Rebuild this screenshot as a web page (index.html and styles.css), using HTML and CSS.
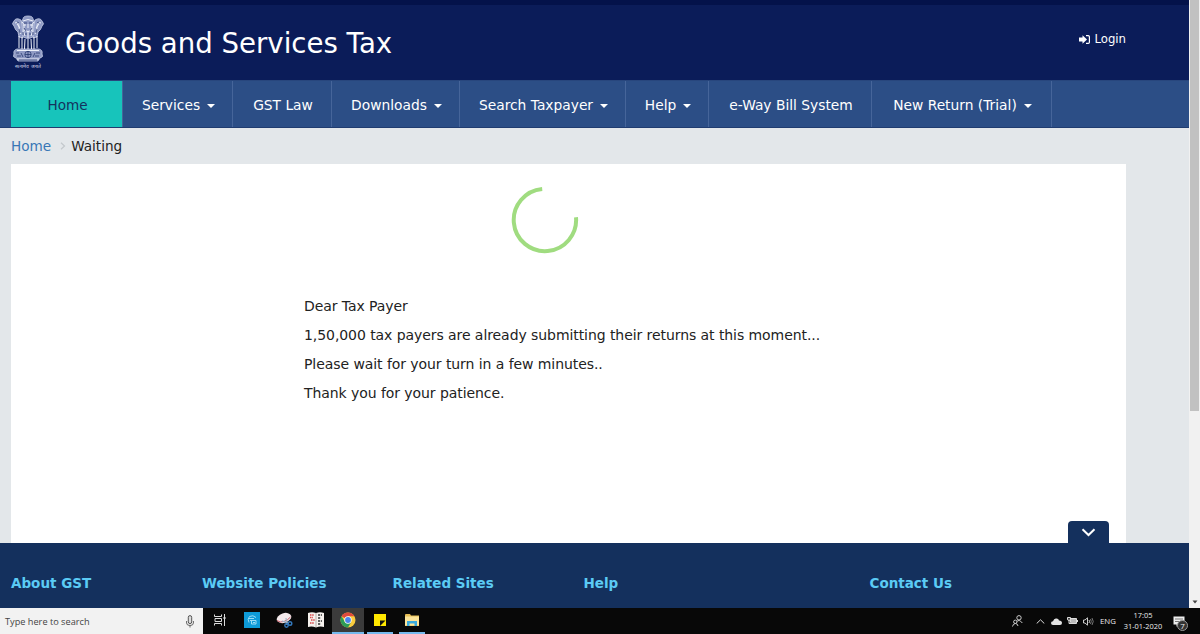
FILE: index.html
```html
<!DOCTYPE html>
<html lang="en">
<head>
  <meta charset="UTF-8">
  <meta name="viewport" content="width=device-width, initial-scale=1.0">
  <title>Goods and Services Tax</title>
  <link rel="stylesheet" href="styles.css">
</head>
<body>
  <div class="browser">
    <div class="page">
      <header class="header">
        <div class="brand">
          <div class="emblem">
            <svg width="34" height="48" viewBox="0 0 34 48">
              <g fill="#8f9ac4" stroke="#c3cae2" stroke-width=".8">
                <path d="M12 4 Q12 1 17 1 Q22 1 22 4 L25 9 L23 21 Q17 26 11 21 L9 9Z"/>
                <path d="M10 5 Q5 2 3 6 Q0 9 3 11 Q4 15 7 17 L8 22 L12 23 L11 10Z"/>
                <path d="M24 5 Q29 2 31 6 Q34 9 31 11 Q30 15 27 17 L26 22 L22 23 L23 10Z"/>
                <path d="M3 39 Q2 35 6 34 H28 Q32 35 31 39 Q33 42 29 43 L27 46 H7 L5 43 Q1 42 3 39Z"/>
              </g>
              <g fill="none" stroke="#eef1fa" stroke-width="1">
                <path d="M8 21 V33 M11 22 V34 M14 24 L13.500 34 M17 24 V34 M20 24 L20.500 34 M23 22 V34 M26 21 V33"/>
                <path d="M12 6 Q17 3 22 6 M12 10 H15 M19 10 H22 M17 9 V13 M13 15 Q17 18 21 15 M6 9 L9 13 M28 9 L25 13"/>
                <path d="M11 7 Q14 9 13 13 T14 21 M23 7 Q20 9 21 13 T20 21 M17 16 V23 M4 8 Q8 6 8 12 T10 19 M30 8 Q26 6 26 12 T24 19 M6 35.500 H28 M6 44 H28"/>
              </g>
              <g fill="none" stroke="#27386f" stroke-width=".8">
                <path d="M13 8 H16 M18 8 H21 M13 13 L15 16 M21 13 L19 16 M14 19 H16 M18 19 H20 M6 7 L8 8 M28 7 L26 8 M8 14 L9 18 M26 14 L25 18 M12 17 V20 M22 17 V20"/>
                <circle cx="17" cy="39.500" r="3.200"/>
                <path d="M17 36 V43 M14 39.500 H20 M5 38 H8 M10 38 L12 42 M6 41 H10 M24 38 L22 42 M25 38 H29 M24 41 H28 M8 45 H26"/>
              </g>
            </svg>
            <span class="motto">सत्यमेव जयते</span>
          </div>
          <h1 class="title">Goods and Services Tax</h1>
        </div>
        <a class="login">
          <svg width="11" height="9" viewBox="0 0 11 9">
            <path fill="#fff" d="M0 2.500 H3.500 V.2 L8 4.500 L3.500 8.800 V6.500 H0Z"/>
            <path fill="none" stroke="#fff" stroke-width="1.200" d="M7 .6 H9.200 Q10.400 .6 10.400 1.800 V7.200 Q10.400 8.400 9.200 8.400 H7"/>
          </svg>
          <span>Login</span>
        </a>
      </header>

      <nav class="nav">
        <a class="nav-item active">Home</a>
        <a class="nav-item">Services <i class="caret"></i></a>
        <a class="nav-item">GST Law</a>
        <a class="nav-item">Downloads <i class="caret"></i></a>
        <a class="nav-item">Search Taxpayer <i class="caret"></i></a>
        <a class="nav-item">Help <i class="caret"></i></a>
        <a class="nav-item">e-Way Bill System</a>
        <a class="nav-item">New Return (Trial) <i class="caret"></i></a>
      </nav>

      <main class="main">
        <div class="breadcrumb">
          <a class="crumb-link">Home</a>
          <svg width="6" height="8" viewBox="0 0 6 8"><path d="M1 .8 L4.500 4 L1 7.200" fill="none" stroke="#c3c8cc" stroke-width="1.200"/></svg>
          <span>Waiting</span>
        </div>
        <div class="content">
          <svg class="spinner" width="68" height="68" viewBox="0 0 68 68">
            <path d="M31.200 2.900 A31.200 31.200 0 1 0 65 31.200" fill="none" stroke="#a0dc80" stroke-width="4"/>
          </svg>
          <div class="message">
            <p>Dear Tax Payer</p>
            <p>1,50,000 tax payers are already submitting their returns at this moment...</p>
            <p>Please wait for your turn in a few minutes..</p>
            <p>Thank you for your patience.</p>
          </div>
          <div class="footer-toggle">
            <svg width="15" height="9" viewBox="0 0 15 9"><path d="M1.500 1.300 L7.500 7 L13.500 1.300" fill="none" stroke="#fff" stroke-width="2"/></svg>
          </div>
        </div>
      </main>

      <footer class="footer">
        <h2>About GST</h2>
        <h2>Website Policies</h2>
        <h2>Related Sites</h2>
        <h2>Help</h2>
        <h2>Contact Us</h2>
      </footer>
    </div>
    <div class="scrollbar">
      <div class="thumb"></div>
      <svg width="6" height="4" viewBox="0 0 6 4"><path d="M.5 .5 H5.500 L3 3.500Z" fill="#444"/></svg>
    </div>
  </div>

  <div class="taskbar">
    <div class="search">
      <span>Type here to search</span>
      <svg width="8" height="13" viewBox="0 0 8 13">
        <rect x="2.300" y=".6" width="3.400" height="8" rx="1.700" fill="#ddd" stroke="#555"/>
        <path d="M.6 6 V8 Q.6 10.500 4 10.500 Q7.400 10.500 7.400 8 V6 M4 10.500 V12.500" fill="none" stroke="#666"/>
      </svg>
    </div>
    <div class="apps">
      <div class="app">
        <svg width="12" height="12" viewBox="0 0 12 12" fill="none" stroke="#ddd">
          <path d="M.5 .5 V2.500 H7.500 V.5 M.5 11.500 V9.500 H7.500 V11.500 M1 4.500 H7.500 V7.500 H1Z M10.500 0 V3 M10.500 5 V12"/>
          <path d="M9.500 4 H11.500" stroke-width="2"/>
        </svg>
      </div>
      <div class="app">
        <svg width="16" height="16" viewBox="0 0 16 16">
          <rect width="16" height="16" fill="#0e9bd8"/>
          <g fill="none" stroke="#9cdcf5"><path d="M12 5.500 Q9 2.500 5.500 4.500 Q3 7 5 10.500 M4.500 6.500 H10 M6 8.500 H12 V12 H7.500 V8.500 M9 10.500 H11"/></g>
        </svg>
      </div>
      <div class="app">
        <svg width="17" height="16" viewBox="0 0 17 16">
          <ellipse cx="8" cy="6" rx="7.500" ry="4.800" fill="#f3e9ec" transform="rotate(-18 8 6)"/>
          <path d="M1 8.500 Q4 11 8 9.500 Q12 8 14.500 5" fill="none" stroke="#c95a66"/>
          <path d="M6 9 L13 11 M10 6 L11 13" stroke="#9fb4c8" stroke-width="1.200"/>
          <circle cx="14" cy="11.500" r="1.800" fill="none" stroke="#3479bd" stroke-width="1.400"/>
          <circle cx="10.500" cy="13.500" r="1.700" fill="none" stroke="#3479bd" stroke-width="1.400"/>
        </svg>
      </div>
      <div class="app">
        <svg width="16" height="16" viewBox="0 0 16 16">
          <path d="M0 1 Q4 -.5 8 1 Q12 -.5 16 1 V15 Q12 14 8 15.500 Q4 14 0 15Z" fill="#f5f1ed"/>
          <path d="M2 3 H6 M2 5.500 H5 M3 8 H7 M2 11 H6" stroke="#d74747" stroke-width="1.600" stroke-dasharray="1.500 .7"/>
          <path d="M10 3 H14 M10 6 H13 M10 9 H14 M10 12 H13" stroke="#333" stroke-width="1.300" stroke-dasharray="2 .8"/>
          <path d="M8 1 V15" stroke="#a9a09b" stroke-width=".8"/>
        </svg>
      </div>
      <div class="app current">
        <svg width="16" height="16" viewBox="0 0 16 16">
          <circle cx="8" cy="8" r="7.500" fill="#f9cb3d"/>
          <path d="M8 8 L1.500 4.200 A7.500 7.500 0 0 1 14.500 4.250 H8Z" fill="#df4a3c"/>
          <path d="M1.500 4.250 A7.500 7.500 0 0 0 8 15.500 L11.200 9.900 L5 10Z" fill="#2d9c57"/>
          <circle cx="8" cy="8" r="3.700" fill="#fff"/>
          <circle cx="8" cy="8" r="2.900" fill="#4a84ea"/>
        </svg>
      </div>
      <div class="app open">
        <svg width="12" height="12" viewBox="0 0 12 12">
          <path d="M0 0 H12 V12 H0Z" fill="#ffe700"/>
          <path d="M6 6.500 H11.500 L6 12Z" fill="#111"/>
        </svg>
      </div>
      <div class="app open">
        <svg width="14" height="12" viewBox="0 0 14 12">
          <path d="M0 1 Q0 0 1 0 H5 L6 1.500 H14 V12 H0Z" fill="#e6bd55"/>
          <path d="M0 2.500 H14 V11.500 H0Z" fill="#fbe49a"/>
          <path d="M2 12 V7 H12 V12 H9.500 V9.500 H4.500 V12Z" fill="#39a9dc"/>
        </svg>
      </div>
    </div>
    <div class="tray">
      <svg class="people" width="11" height="12" viewBox="0 0 11 12" fill="none" stroke="#ccc">
        <circle cx="7" cy="2.800" r="2.200"/><path d="M4.500 7 Q7 3.500 10.300 8"/>
        <circle cx="3.300" cy="6.800" r="1.700"/><path d="M.5 11.500 Q1 8.500 3.500 8.500 Q5.800 8.700 6 11"/>
      </svg>
      <svg class="up" width="9" height="5" viewBox="0 0 9 5"><path d="M.7 4.500 L4.500 .8 L8.300 4.500" fill="none" stroke="#ddd"/></svg>
      <svg class="cloud" width="11" height="7" viewBox="0 0 11 7"><path d="M2 7 Q0 7 0 5 Q0 3.300 2 3.300 Q3 0 5.500 .5 Q7.600 .6 8 2.500 Q11 2.500 11 5 Q11 7 9 7Z" fill="#e3e3e3"/></svg>
      <svg class="battery" width="11" height="8" viewBox="0 0 11 8">
        <path d="M3.500 1.500 H9.500 V6.500 H3.500Z" fill="#bbb" stroke="#ddd"/><path d="M10.500 3 V5" stroke="#ddd"/>
        <path d="M.5 .5 H3.500 V2 Q3.500 3.500 2 3.500 Q.5 3.500 .5 2Z M2 3.500 V6.500 H4" fill="#444" stroke="#ddd"/>
      </svg>
      <svg class="sound" width="11" height="9" viewBox="0 0 11 9" fill="none" stroke="#ccc">
        <path d="M.5 3 H2 L4.500 .8 V8.200 L2 6 H.5Z M6 3 Q7 4.500 6 6"/>
        <path d="M7.500 2 Q9 4.500 7.500 7 M9 1 Q11.500 4.500 9 8" stroke="#777"/>
      </svg>
      <span class="lang">ENG</span>
      <div class="clock"><span>17:05</span><span>31-01-2020</span></div>
      <div class="notify">
        <svg width="12" height="11" viewBox="0 0 12 11">
          <path d="M.5 .5 H11.500 V8.500 H6 L3.500 10.800 V8.500 H.5Z" fill="#eee"/>
          <path d="M2 3 H10 M2 5.500 H8" stroke="#777"/>
        </svg>
        <span class="badge">7</span>
      </div>
    </div>
  </div>
</body>
</html>
```

FILE: styles.css
```css
* {
  box-sizing: border-box;
}

body {
  margin: 0;
  width: 1200px;
  height: 634px;
  overflow: hidden;
  font-family: Verdana, "DejaVu Sans", sans-serif;
  font-size: 14px;
  color: #222;
}

svg {
  display: block;
  flex: none;
}

.browser {
  display: flex;
  height: 608px;
}

.page {
  width: 1189px;
  display: flex;
  flex-direction: column;
}

/* header */
.header {
  height: 80px;
  display: flex;
  justify-content: space-between;
  background: #0b1c59;
  border-top: 5px solid #04124a;
  padding: 0 63px 0 11px;
}

.brand {
  display: flex;
}

.emblem {
  width: 34px;
  padding-top: 10px;
}

.motto {
  display: block;
  font-size: 5px;
  line-height: 7px;
  text-align: center;
  white-space: nowrap;
  color: #d5daec;
}

.title {
  margin: 0 0 0 20px;
  font-size: 27.6px;
  font-weight: normal;
  line-height: 78px;
  height: 75px;
  color: #fff;
}

.login {
  display: flex;
  align-items: center;
  gap: 4px;
  height: 68px;
  font-size: 11.7px;
  color: #fff;
}

/* nav */
.nav {
  height: 48px;
  display: grid;
  grid-template-columns: 112px 110px 99px 128px 166px 83px 163px 180px;
  padding-left: 11px;
  background: #2c4e86;
  border-top: 1px solid #28467d;
  border-bottom: 1px solid #203c70;
}

.nav-item {
  display: flex;
  align-items: center;
  justify-content: center;
  gap: 7px;
  border-right: 1px solid #46659a;
  padding: 2px 0 0 2px;
  font-size: 13.8px;
  color: #fff;
  white-space: nowrap;
}

.nav-item.active {
  background: #17c4bb;
  color: #14315d;
  font-size: 13.6px;
}

.caret {
  border-top: 4px solid #fff;
  border-left: 4px solid transparent;
  border-right: 4px solid transparent;
  margin-top: 2px;
}

/* content */
.main {
  flex: 1;
  display: flex;
  flex-direction: column;
  background: #e3e7ea;
  padding: 0 63px 0 11px;
}

.breadcrumb {
  height: 36px;
  display: flex;
  align-items: center;
  gap: 5px;
  font-size: 13.6px;
}

.breadcrumb svg {
  margin-left: 4px;
}

.crumb-link {
  color: #3776b6;
}

.content {
  position: relative;
  flex: 1;
  background: #fff;
  padding: 22px 0 0 293px;
}

.spinner {
  margin-left: 207px;
}

.message {
  margin-top: 37.5px;
  letter-spacing: -0.07px;
}

.message p {
  margin: 0;
  line-height: 29.3px;
  white-space: nowrap;
}

.footer-toggle {
  position: absolute;
  right: 17px;
  bottom: 0;
  width: 41px;
  height: 22px;
  display: flex;
  justify-content: center;
  padding-top: 7px;
  background: #14305d;
  border-radius: 4px 4px 0 0;
}

.footer {
  height: 65px;
  display: grid;
  grid-template-columns: 191px 190.5px 191px 286px 1fr;
  padding-left: 11px;
  background: #14305d;
}

.footer h2 {
  margin: 0;
  font-size: 13.5px;
  line-height: 81px;
  height: 65px;
  color: #5bcbf5;
}

/* scrollbar */
.scrollbar {
  width: 11px;
  display: flex;
  flex-direction: column;
  justify-content: space-between;
  align-items: center;
  background: #f1f1f1;
  padding-bottom: 4px;
}

.thumb {
  width: 9px;
  height: 411px;
  background: #c1c1c1;
}

/* taskbar */
.taskbar {
  height: 26px;
  display: flex;
  background: #080808;
  font-family: "Open Sans", "Noto Sans", sans-serif;
  color: #eee;
}

.search {
  width: 203px;
  display: flex;
  align-items: center;
  justify-content: space-between;
  background: #f2f2f2;
  padding: 0 9px 0 5px;
  font-size: 9.2px;
  color: #444;
}

.apps {
  display: flex;
  padding-left: 1px;
}

.app {
  width: 32px;
  display: flex;
  align-items: center;
  justify-content: center;
  border-bottom: 2px solid transparent;
}

.app.current {
  background: #3b3b3b;
  border-bottom-color: #76b9ed;
}

.app.open {
  background: linear-gradient(#76b9ed, #76b9ed) center bottom / 26px 2px no-repeat border-box;
}

.tray {
  margin-left: auto;
  display: flex;
  align-items: center;
  padding-right: 15px;
}

.up {
  margin-left: 13px;
}

.cloud {
  margin-left: 6px;
}

.battery,
.sound {
  margin-left: 5px;
}

.lang {
  margin-left: 6px;
  width: 16px;
  font-size: 7.8px;
}

.clock {
  margin-left: 7px;
  width: 40px;
  display: flex;
  flex-direction: column;
  align-items: center;
  font-size: 7.4px;
  line-height: 11.5px;
  white-space: nowrap;
}

.notify {
  position: relative;
  margin-left: 10px;
}

.badge {
  position: absolute;
  left: 4px;
  top: 4px;
  width: 11px;
  height: 11px;
  border: 1px solid #999;
  border-radius: 50%;
  background: #333;
  font-size: 8px;
  line-height: 9px;
  text-align: center;
}
```
